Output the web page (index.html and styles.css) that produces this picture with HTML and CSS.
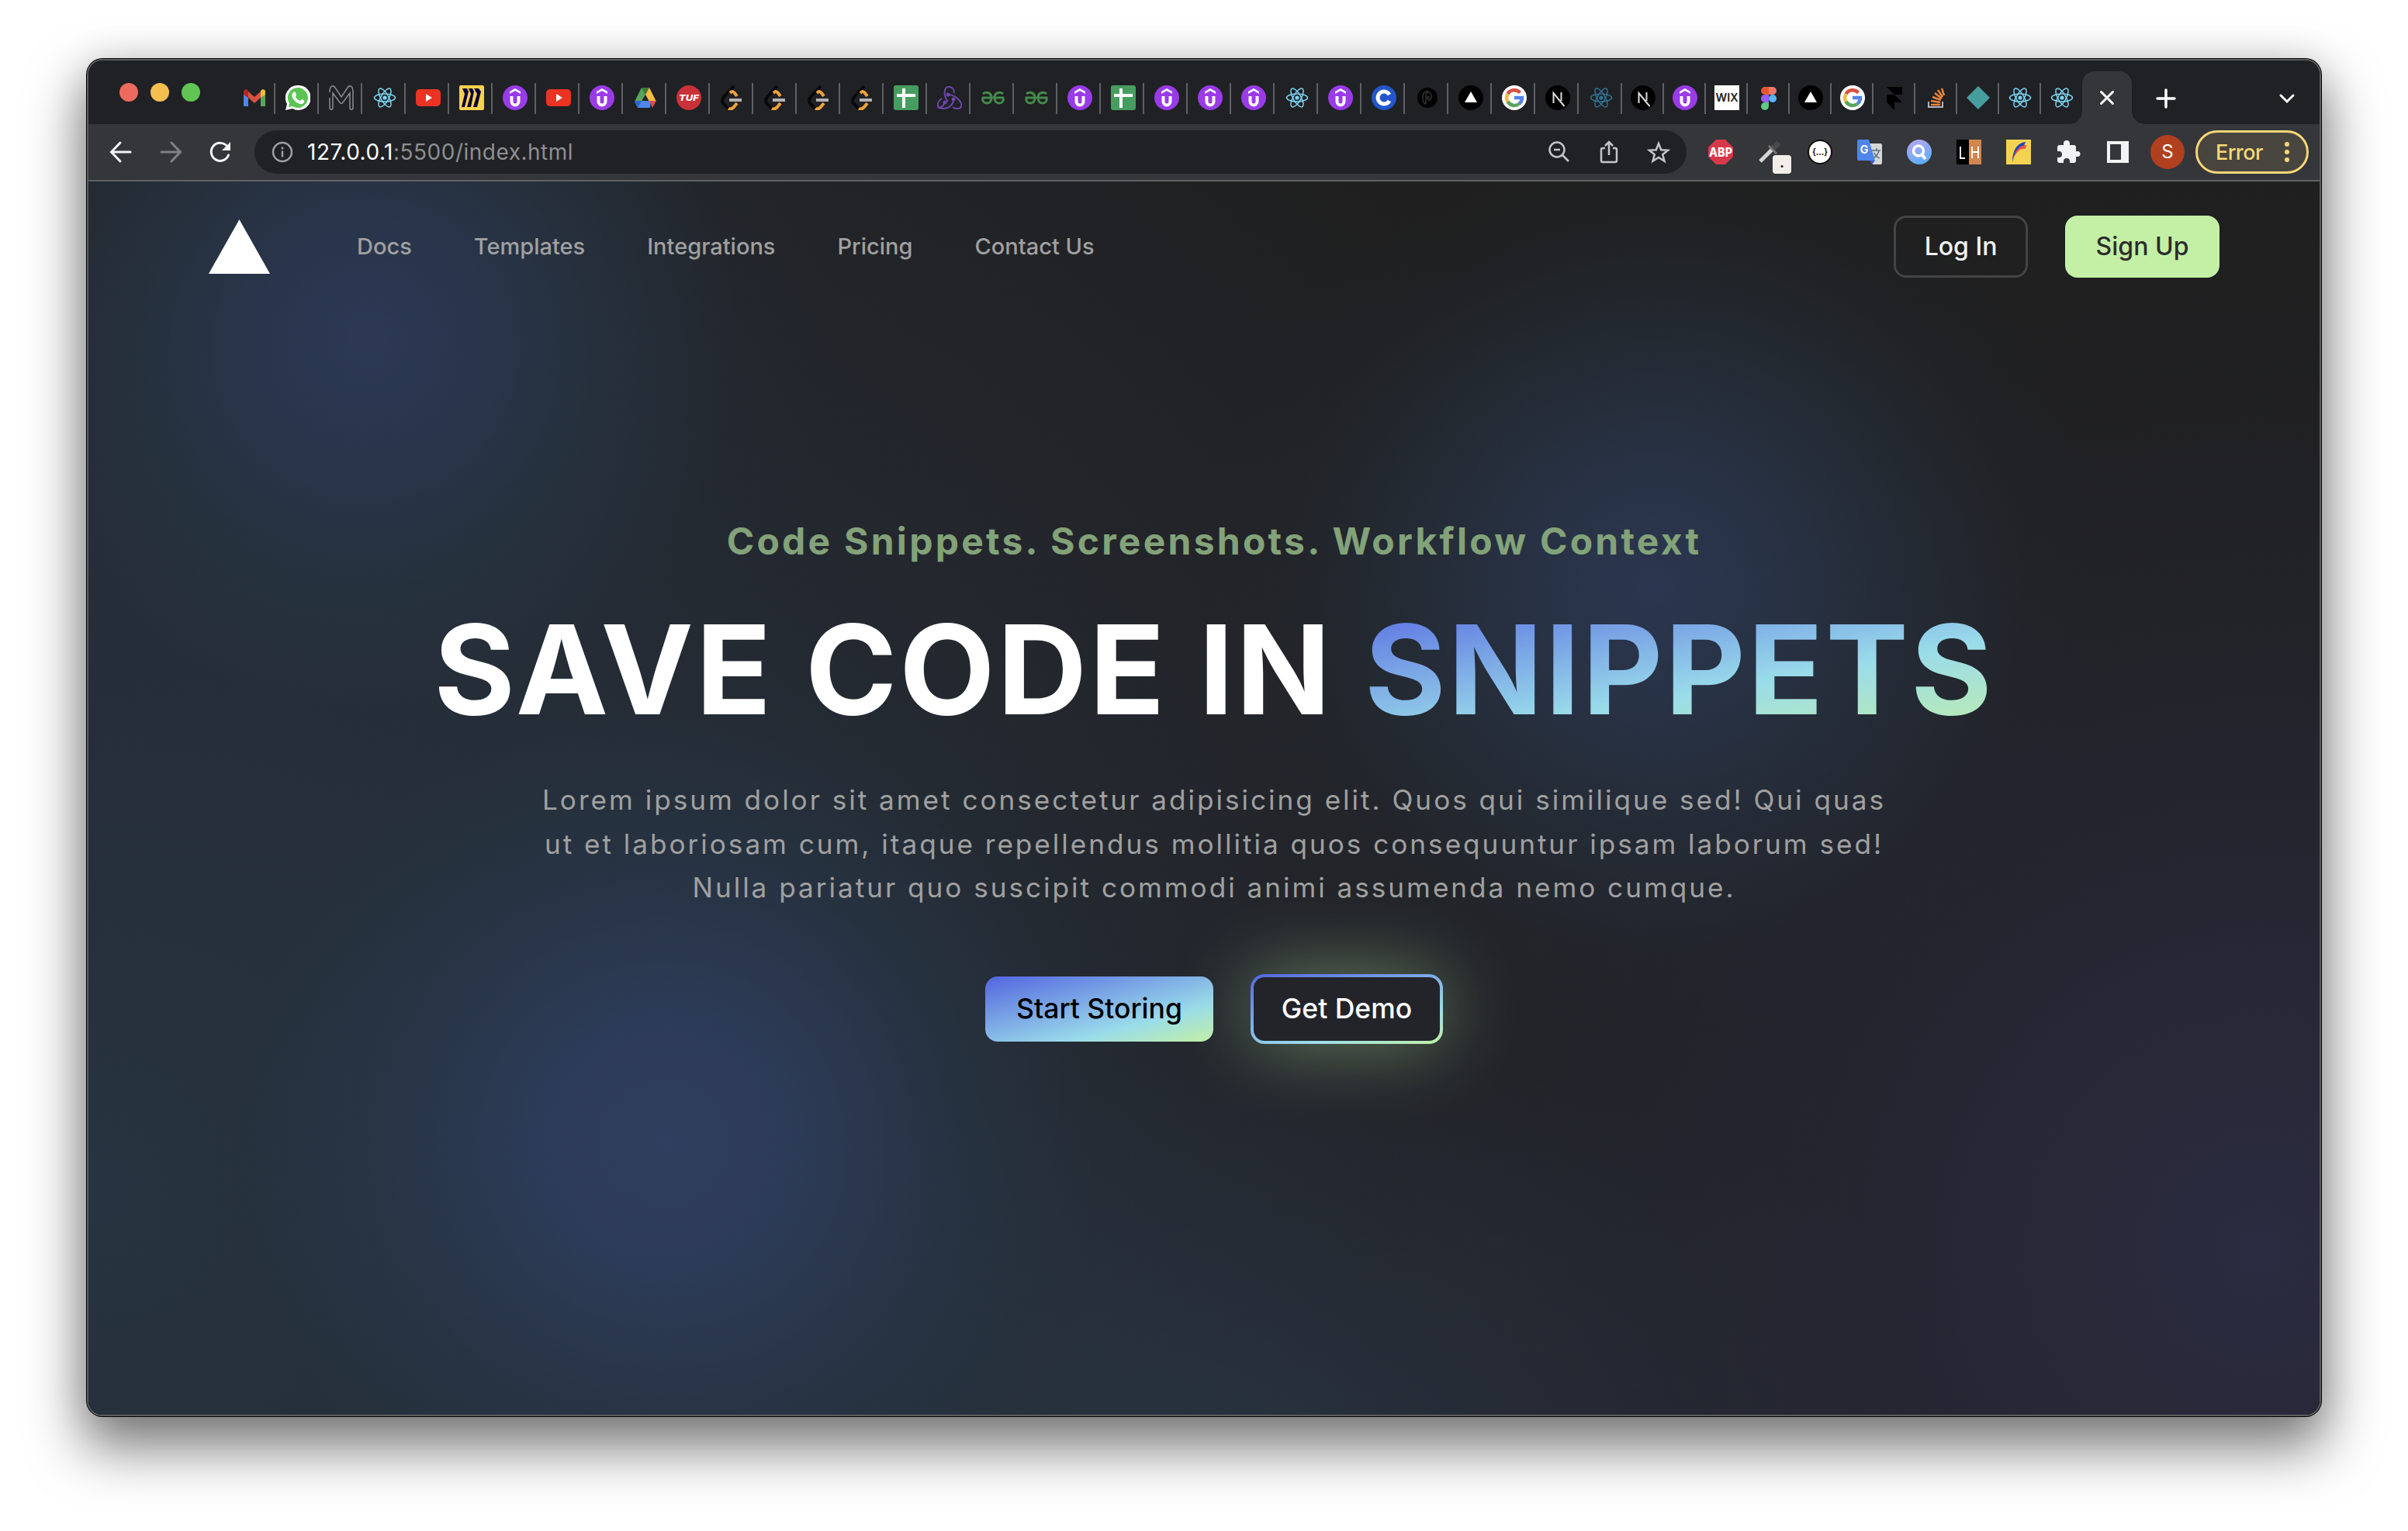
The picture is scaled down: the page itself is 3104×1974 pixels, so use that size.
FILE: index.html
```html
<!DOCTYPE html>
<html lang="en">
<head>
<meta charset="utf-8">
<title>Snippets</title>
<link rel="stylesheet" href="styles.css">
</head>
<body>
<svg width="0" height="0" class="defs" aria-hidden="true">
  <symbol id="gmail" viewBox="0 0 32 32"><path fill="#4f86ec" d="M2 11v16h6V16z"/><path fill="#58a55c" d="M30 11v16h-6V16z"/><path fill="#d85140" d="M8 8l8 7 8-7v8l-8 7-8-7z"/><path fill="#b5261e" d="M2 11V8c0-3 4-4 6-1v9l-6-4z"/><path fill="#f2bd42" d="M30 11V8c0-3-4-4-6-1v9l6-4z"/></symbol>
  <symbol id="whatsapp" viewBox="0 0 32 32"><path fill="#fff" d="M16 0a16 16 0 1 1-7 30L0 32l2-8A16 16 0 0 1 16 0z"/><path fill="#5cc453" d="M16 3a13 13 0 1 1-7 24l-5 1 1-5A13 13 0 0 1 16 3z"/><path fill="#fff" d="M10 9c2-2 3 0 4 3l-1 3c2 3 3 4 6 5l2-2c3 1 4 2 3 4-3 4-8 2-12-2-4-4-5-8-2-11z"/></symbol>
  <symbol id="mono" viewBox="0 0 32 32"><path fill="none" stroke="#8b8c8f" stroke-width="1.5" d="M1 9c0-10 5-9 7-6l8 12 8-12c2-3 7-4 7 6v20c0 3-4 3-4 0V10l-9 12c-1 2-3 2-4 0L5 10v19c0 3-4 3-4 0V16"/></symbol>
  <symbol id="react" viewBox="0 0 32 32"><g fill="none" stroke="currentColor" stroke-width="1.5"><ellipse cx="16" cy="16" rx="13.5" ry="5"/><ellipse cx="16" cy="16" rx="13.5" ry="5" transform="rotate(60 16 16)"/><ellipse cx="16" cy="16" rx="13.5" ry="5" transform="rotate(120 16 16)"/></g><circle cx="16" cy="16" r="2.6" fill="currentColor"/></symbol>
  <symbol id="youtube" viewBox="0 0 32 32"><rect y="5" width="32" height="22" rx="5" fill="#ea3323"/><path fill="#fff" d="M13 11v10l8-5z"/></symbol>
  <symbol id="miro" viewBox="0 0 32 32"><rect width="32" height="32" rx="2" fill="#f9d24f"/><path fill="#07043a" d="M4 4h6l2 4-5 20H3l4-17zM12 4h5l2 4-4 20h-5l5-17zM19 4h6l3 4-5 20h-5l5-17z"/></symbol>
  <symbol id="udemy" viewBox="0 0 32 32"><circle cx="16" cy="16" r="16" fill="#9a3be8"/><path fill="#fff" d="M16 4l7 4v3l-7-4-7 4V8z"/><path fill="none" stroke="#fff" stroke-width="4" d="M11.500 14v7a4.500 4.500 0 0 0 9 0v-7"/></symbol>
  <symbol id="drive" viewBox="0 0 32 32"><path fill="#58a55c" d="M11 3l5 9-10 17-4-8z"/><path fill="#3b7d3c" d="M11 3h10l-5 9z"/><path fill="#f2bd42" d="M21 3l9 18h-9l-5-9z"/><path fill="#4f86ec" d="M11 20h12l-1 9H6z"/><path fill="#2f63cf" d="M2 20h9l-5 9z"/><path fill="#dd5144" d="M21 20h9l-5 9z"/></symbol>
  <symbol id="tuf" viewBox="0 0 32 32"><circle cx="16" cy="16" r="16" fill="#c93238"/><text x="16" y="20" text-anchor="middle" font-size="11" font-weight="800" font-style="italic" fill="#fff" textLength="26" lengthAdjust="spacingAndGlyphs">TUF</text></symbol>
  <symbol id="leet" viewBox="0 0 32 32"><g fill="none" stroke-width="4"><path stroke="#080808" d="M18 1L5 15c-3 4-2 7 0 9l6 6"/><path stroke="#f0a33b" d="M13 10c3-3 4-2 6 0l3 4M22 23l-4 5c-2 2-5 3-7 2"/><path stroke="#b3b3b3" d="M12 19h16"/></g></symbol>
  <symbol id="sheets" viewBox="0 0 32 32"><rect width="32" height="32" rx="3" fill="#479c5f"/><path stroke="#fff" stroke-width="4" d="M4 13h24M13 4v25"/></symbol>
  <symbol id="redux" viewBox="0 0 32 32"><g fill="none" stroke="#6c48aa" stroke-width="2"><path d="M14 21C8 14 8 2 15 2c5 0 7 4 7 8"/><path d="M10 22c-4 8-9 9-9 5-1-4 2-8 5-10M13 12c10-1 20 10 18 15-1 4-7 4-11 1"/><path d="M21 18c1 6-6 12-13 12-5 0-8-3-7-7"/></g><g fill="#6c48aa"><circle cx="14" cy="12" r="2.500"/><circle cx="10" cy="22" r="2.500"/><circle cx="21" cy="18" r="2.500"/></g></symbol>
  <symbol id="gfg" viewBox="0 0 32 32"><g fill="none" stroke="#438a4b" stroke-width="3"><path d="M3 11c4-3 11-2 11 5 0 5-3 7-6 7-4 0-6-3-5-7h26c1 4-1 7-5 7-3 0-6-2-6-7 0-7 7-8 11-5"/></g></symbol>
  <symbol id="coursera" viewBox="0 0 32 32"><circle cx="16" cy="16" r="16" fill="#2356cc"/><path fill="none" stroke="#fff" stroke-width="5" d="M23 12a8 8 0 1 0 0 8"/></symbol>
  <symbol id="dark" viewBox="0 0 32 32"><circle cx="16" cy="16" r="13" fill="#000"/><path fill="none" stroke="#333" stroke-width="1.500" d="M14 24V11c3-4 8-1 7 5-1 4-4 4-5 1s3-4 2 0M14 24c-3 0-4-3-4-9s4-8 8-7"/></symbol>
  <symbol id="vercel" viewBox="0 0 32 32"><circle cx="16" cy="16" r="16" fill="#000"/><path fill="#fff" d="M16 8l8 14H8z"/></symbol>
  <symbol id="google" viewBox="0 0 32 32"><circle cx="16" cy="16" r="16" fill="#fff"/><g fill="none" stroke-width="4.500"><path stroke="#d95040" d="M23.500 9.500A10 10 0 0 0 7.500 11"/><path stroke="#f2bd42" d="M7.500 11a10 10 0 0 0 0 10"/><path stroke="#58a55c" d="M7.500 21a10 10 0 0 0 14.500 3"/><path stroke="#5383ec" d="M22 24a10 10 0 0 0 4-8H16"/></g></symbol>
  <symbol id="next" viewBox="0 0 32 32"><circle cx="16" cy="16" r="16" fill="#000"/><path fill="none" stroke="#ddd" stroke-width="2" d="M10.500 23V10l14 17M20.500 9v11"/></symbol>
  <symbol id="wix" viewBox="0 0 32 32"><path fill="#fff" d="M0 0h32v32H0z"/><text x="16" y="21" text-anchor="middle" font-size="15" font-weight="600" fill="#222" textLength="29" lengthAdjust="spacingAndGlyphs">WIX</text></symbol>
  <symbol id="figma" viewBox="0 0 32 32"><path fill="#e4572e" d="M16 2v10h-5a5 5 0 0 1 0-10z"/><path fill="#ee786a" d="M16 2h5a5 5 0 0 1 0 10h-5z"/><path fill="#9b5cf6" d="M16 12v10h-5a5 5 0 0 1 0-10z"/><circle cx="21" cy="17" r="5" fill="#58b6f8"/><path fill="#62c884" d="M16 22v5a5 5 0 1 1-5-5z"/></symbol>
  <symbol id="framer" viewBox="0 0 32 32"><path fill="#000" d="M6 2h20v10H16l10 10H16v10L6 22V12h10z"/></symbol>
  <symbol id="stack" viewBox="0 0 32 32"><path fill="none" stroke="#b0b4ba" stroke-width="2" d="M6 21v7h18v-7"/><path stroke="#e9863b" stroke-width="2.500" d="M9 25h12M9 20l12 2M11 15l11 4M14 10l9 7M18 6l6 9M23 4l3 9"/></symbol>
  <symbol id="diamond" viewBox="0 0 32 32"><path fill="#479e9e" d="M16 1l15 15-15 15L1 16z"/></symbol>
</svg>

<div class="window">
  <div class="tabstrip">
    <div class="lights"><i class="red"></i><i class="yellow"></i><i class="green"></i></div>
    <div class="tabs">
      <div class="tab"><svg><use href="#gmail"/></svg></div>
      <div class="tab"><svg><use href="#whatsapp"/></svg></div>
      <div class="tab"><svg><use href="#mono"/></svg></div>
      <div class="tab"><svg><use href="#react"/></svg></div>
      <div class="tab"><svg><use href="#youtube"/></svg></div>
      <div class="tab"><svg><use href="#miro"/></svg></div>
      <div class="tab"><svg><use href="#udemy"/></svg></div>
      <div class="tab"><svg><use href="#youtube"/></svg></div>
      <div class="tab"><svg><use href="#udemy"/></svg></div>
      <div class="tab"><svg><use href="#drive"/></svg></div>
      <div class="tab"><svg><use href="#tuf"/></svg></div>
      <div class="tab"><svg><use href="#leet"/></svg></div>
      <div class="tab"><svg><use href="#leet"/></svg></div>
      <div class="tab"><svg><use href="#leet"/></svg></div>
      <div class="tab"><svg><use href="#leet"/></svg></div>
      <div class="tab"><svg><use href="#sheets"/></svg></div>
      <div class="tab"><svg><use href="#redux"/></svg></div>
      <div class="tab"><svg><use href="#gfg"/></svg></div>
      <div class="tab"><svg><use href="#gfg"/></svg></div>
      <div class="tab"><svg><use href="#udemy"/></svg></div>
      <div class="tab"><svg><use href="#sheets"/></svg></div>
      <div class="tab"><svg><use href="#udemy"/></svg></div>
      <div class="tab"><svg><use href="#udemy"/></svg></div>
      <div class="tab"><svg><use href="#udemy"/></svg></div>
      <div class="tab"><svg><use href="#react"/></svg></div>
      <div class="tab"><svg><use href="#udemy"/></svg></div>
      <div class="tab"><svg><use href="#coursera"/></svg></div>
      <div class="tab"><svg><use href="#dark"/></svg></div>
      <div class="tab"><svg><use href="#vercel"/></svg></div>
      <div class="tab"><svg><use href="#google"/></svg></div>
      <div class="tab"><svg><use href="#next"/></svg></div>
      <div class="tab old-react"><svg><use href="#react"/></svg></div>
      <div class="tab narrow"><svg><use href="#next"/></svg></div>
      <div class="tab narrow"><svg><use href="#udemy"/></svg></div>
      <div class="tab narrow"><svg><use href="#wix"/></svg></div>
      <div class="tab narrow"><svg><use href="#figma"/></svg></div>
      <div class="tab narrow"><svg><use href="#vercel"/></svg></div>
      <div class="tab narrow"><svg><use href="#google"/></svg></div>
      <div class="tab narrow"><svg><use href="#framer"/></svg></div>
      <div class="tab narrow"><svg><use href="#stack"/></svg></div>
      <div class="tab narrow"><svg><use href="#diamond"/></svg></div>
      <div class="tab narrow"><svg><use href="#react"/></svg></div>
      <div class="tab narrow last"><svg><use href="#react"/></svg></div>
    </div>
    <div class="active-tab"><svg viewBox="0 0 32 32"><path d="M8.500 8.500l15 15m0-15l-15 15"/></svg></div>
    <svg class="new-tab" viewBox="0 0 32 32"><path d="M16 5v22M5 16h22"/></svg>
    <svg class="tab-search" viewBox="0 0 32 32"><path d="M8 12l8 8 8-8"/></svg>
  </div>

  <div class="toolbar">
    <svg class="tool" viewBox="0 0 32 32"><path d="M28 16H4M15 4L3.500 16 15 28"/></svg>
    <svg class="tool dim" viewBox="0 0 32 32"><path d="M4 16h24M17 4l11.500 12L17 28"/></svg>
    <svg class="tool" viewBox="0 0 32 32"><path d="M25 9A11.500 11.500 0 1 0 26.500 20"/><path class="solid" d="M29 3v11H18z"/></svg>
    <div class="address">
      <svg class="info" viewBox="0 0 32 32"><circle cx="16" cy="16" r="12"/><path d="M16 14.500v8M16 9.500v3"/></svg>
      <span class="url"><b>127.0.0.1</b>:5500/index.html</span>
      <svg viewBox="0 0 32 32"><circle cx="13" cy="13" r="9.500"/><path d="M20 20l8 8M9 13h8"/></svg>
      <svg viewBox="0 0 32 32"><path d="M11 11H8a2 2 0 0 0-2 2v14a2 2 0 0 0 2 2h16a2 2 0 0 0 2-2V13a2 2 0 0 0-2-2h-3M16 20V4M11 8l5-5 5 5"/></svg>
      <svg viewBox="0 0 32 32"><path d="M16 5l3.200 8.200 8.800.5-6.800 5.500 2.300 8.600L16 23l-7.500 4.800 2.300-8.600L4 13.700l8.800-.5z"/></svg>
    </div>
    <div class="extensions">
      <svg viewBox="0 0 32 32"><path fill="#d83849" d="M10 0h12l10 10v12L22 32H10L0 22V10z"/><text x="16" y="21.500" text-anchor="middle" font-size="16" font-weight="800" fill="#fff" textLength="30" lengthAdjust="spacingAndGlyphs">ABP</text></svg>
      <div class="picker"><svg viewBox="0 0 32 32"><path stroke="#d5d5d5" stroke-width="5" d="M3 28L19 12"/><path stroke="#4a4a4a" stroke-width="7" d="M18 13L27 4"/><path stroke="#777" stroke-width="3" d="M14 8l10 10"/></svg><span class="badge">.</span></div>
      <svg viewBox="0 0 32 32"><circle cx="16" cy="16" r="15" fill="#fff" stroke="#111" stroke-width="2"/><text x="16" y="20" text-anchor="middle" font-size="12" font-weight="700" fill="#111" textLength="20" lengthAdjust="spacingAndGlyphs">{...}</text></svg>
      <svg viewBox="0 0 32 32"><path fill="#d5d7d9" d="M14 5h16a2 2 0 0 1 2 2v23a2 2 0 0 1-2 2H20z"/><path fill="#3a5bc0" d="M16 27h7l-4 5z"/><path fill="#4f86ec" d="M2 0h13l8 27H2a2 2 0 0 1-2-2V2a2 2 0 0 1 2-2z"/><text x="9" y="18" text-anchor="middle" font-size="14" font-weight="700" fill="#fff">G</text><path fill="none" stroke="#5d7480" stroke-width="1.500" d="M19 14h11M25 11v3M28 14c-1 5-4 8-7 10M22 17c1 3 4 6 7 7"/></svg>
      <svg viewBox="0 0 32 32"><defs><linearGradient id="lens" x2=".4" y2="1"><stop stop-color="#bfa4ef"/><stop offset="1" stop-color="#62aef8"/></linearGradient></defs><circle cx="16" cy="16" r="16" fill="url(#lens)"/><circle cx="15" cy="14.500" r="6.500" fill="none" stroke="#fff" stroke-width="3.500"/><path stroke="#fff" stroke-width="4" d="M19 19l5 6"/></svg>
      <svg viewBox="0 0 32 32"><path d="M0 0h16v32H0z"/><path fill="#d18650" d="M16 0h16v32H16z"/><path fill="none" stroke="#fff" stroke-width="1.800" d="M5 9v15h6M20 9v15M28 9v15M20 16h8"/></svg>
      <svg viewBox="0 0 32 32"><path fill="#f3d34f" d="M0 0h32v32H0z"/><path fill="#1e44b5" d="M8 29C8 14 14 4 25 3l-2 5C15 9 11 17 8 29z"/><path fill="#e8544a" d="M10 23C12 13 18 7 26 7l-1 5c-7-1-11 4-15 11z"/></svg>
      <svg viewBox="0 0 32 32"><path fill="#f1f3f4" d="M28 15h-2v-5a3 3 0 0 0-3-3h-5V5a4 4 0 0 0-8 0v2H5a3 3 0 0 0-3 3v5h2a4 4 0 0 1 0 8H2v4a3 3 0 0 0 3 3h5v-2a4 4 0 0 1 8 0v2h5a3 3 0 0 0 3-3v-5h2a3.500 3.500 0 0 0 0-7z"/></svg>
      <svg viewBox="0 0 32 32"><path fill="#f1f3f4" fill-rule="evenodd" d="M2 2h28v28H2zM6 6v20h14V6z"/></svg>
    </div>
    <div class="avatar">S</div>
    <div class="error">Error<span class="dots"><i></i><i></i><i></i></span></div>
  </div>

  <div class="page">
    <nav class="nav">
      <svg class="logo" viewBox="0 0 79 70"><path fill="#fff" d="M39.500 0L79 70H0z"/></svg>
      <div class="links"><a>Docs</a><a>Templates</a><a>Integrations</a><a>Pricing</a><a>Contact Us</a></div>
      <a class="btn login">Log In</a>
      <a class="btn signup">Sign Up</a>
    </nav>
    <main class="hero">
      <h3 class="tagline">Code Snippets. Screenshots. Workflow Context</h3>
      <h1 class="title">SAVE CODE IN <span class="grad">SNIPPETS</span></h1>
      <p class="lead">Lorem ipsum dolor sit amet consectetur adipisicing elit. Quos qui similique sed! Qui quas<br>ut et laboriosam cum, itaque repellendus mollitia quos consequuntur ipsam laborum sed!<br>Nulla pariatur quo suscipit commodi animi assumenda nemo cumque.</p>
      <div class="actions"><a class="start">Start Storing</a><a class="demo">Get Demo</a></div>
    </main>
  </div>
</div>
</body>
</html>
```
FILE: styles.css
```css
* { box-sizing: border-box; }
body {
  margin: 0;
  height: 1974px;
  overflow: hidden;
  padding: 76px 112px 0;
  background: #fff;
  font-family: Inter, "Liberation Sans", sans-serif;
}
svg { display: block; overflow: visible; }
.defs { position: absolute; }

.window {
  width: 2880px;
  height: 1750px;
  border: 2px solid #5c5e5f;
  border-radius: 20px;
  overflow: hidden;
  display: flex;
  flex-direction: column;
  background: #202124;
  box-shadow: 0 0 0 1px #000, 0 36px 70px 6px rgba(0, 0, 0, .5), 0 0 50px rgba(0, 0, 0, .12);
}

/* tab strip */
.tabstrip { height: 82px; flex: none; display: flex; align-items: center; background: #202124; }
.lights { display: flex; align-items: flex-start; gap: 16px; width: 185px; height: 82px; padding: 29px 0 0 40px; }
.lights i { width: 24px; height: 24px; border-radius: 50%; }
.red { background: #ed6a5e; }
.yellow { background: #f4bf4f; }
.green { background: #61c554; }
.tabs { display: flex; margin-top: 15px; }
.tab { width: 56px; height: 40px; border-right: 2px solid #5f6063; display: flex; align-items: center; justify-content: center; padding: 0 0 2px 3px; color: #7cd6f5; }
.tab svg { width: 32px; height: 32px; flex: none; }
.tab.narrow { width: 54px; padding-left: 1px; }
.tab.last { border-right: 0; padding-right: 2px; }
.tab.old-react { color: #2f7391; }
.active-tab { position: relative; width: 64px; height: 68px; margin: 14px 0 0 -1px; padding-bottom: 1px; border-radius: 16px 16px 0 0; background: #35363a; display: flex; align-items: center; justify-content: center; }
.active-tab::before, .active-tab::after { content: ""; position: absolute; bottom: 0; width: 16px; height: 16px; }
.active-tab::before { right: 100%; background: radial-gradient(circle at 0 0, transparent 15.500px, #35363a 16px); }
.active-tab::after { left: 100%; background: radial-gradient(circle at 100% 0, transparent 15.500px, #35363a 16px); }
.active-tab svg, .new-tab, .tab-search { width: 32px; height: 32px; fill: none; stroke: #fff; stroke-width: 3; stroke-linecap: round; }
.new-tab { margin: 15px 0 0 28px; stroke-width: 3.500; }
.tab-search { margin: 15px 26px 0 auto; }

/* toolbar */
.toolbar { height: 74px; flex: none; display: flex; align-items: center; background: #35363a; border-bottom: 2px solid #5f6164; padding: 0 14px 0 26px; }
.tool { width: 32px; height: 32px; margin-right: 32px; fill: none; stroke: #f1f3f4; stroke-width: 3; stroke-linecap: round; }
.tool.dim { stroke: #808184; }
.tool .solid { fill: #f1f3f4; stroke: none; }
.address { width: 1846px; height: 56px; margin-left: -4px; border-radius: 28px; background: #202124; display: flex; align-items: center; padding: 0 20px; gap: 32px; }
.address svg { width: 32px; height: 32px; fill: none; stroke: #c4c5c7; stroke-width: 2.500; }
.address .info { stroke: #9aa0a6; margin-right: -16px; }
.url { flex: 1; font-size: 28px; letter-spacing: .5px; color: #8d8f92; }
.url b { font-weight: 400; color: #fff; }
.extensions { display: flex; gap: 32px; margin-left: 28px; }
.extensions svg { width: 32px; height: 32px; }
.picker { position: relative; }
.badge { position: absolute; left: 19px; top: 20px; width: 24px; height: 24px; border-radius: 4px; background: #f3eeea; color: #222; font-size: 18px; line-height: 20px; font-weight: 700; text-align: center; }
.avatar { width: 44px; height: 44px; margin-left: 26px; border-radius: 50%; background: #b1401f; color: #fff; font-size: 24px; line-height: 44px; text-align: center; }
.error { width: 146px; height: 56px; margin-left: 14px; border: 3px solid #f8d777; border-radius: 28px; background: #47453e; color: #f8d777; display: flex; align-items: center; justify-content: space-between; font-size: 27px; font-weight: 500; letter-spacing: -.6px; padding: 0 22px 0 23px; }
.dots { display: grid; gap: 4px; }
.dots i { width: 6px; height: 6px; border-radius: 50%; background: #f8d777; }

/* page */
.page {
  flex: 1;
  padding: 43px 129px 0 155px;
  background:
    radial-gradient(circle 600px at 360px 200px, rgba(46, 60, 92, .85) 0, rgba(43, 58, 86, .75) 22%, rgba(40, 56, 74, .5) 50%, rgba(38, 48, 60, .12) 80%, transparent 100%),
    radial-gradient(circle 580px at 2020px 520px, rgba(45, 58, 88, .85) 0, rgba(43, 57, 82, .7) 28%, rgba(40, 54, 72, .45) 55%, rgba(36, 44, 56, .12) 82%, transparent 100%),
    radial-gradient(circle 680px at 745px 1240px, rgba(49, 63, 97, .95) 0, rgba(46, 62, 94, .8) 25%, rgba(40, 56, 76, .5) 55%, rgba(38, 48, 60, .12) 82%, transparent 100%),
    radial-gradient(circle 1500px at 2800px 1380px, rgba(44, 44, 67, .95) 0, rgba(41, 41, 60, .75) 25%, rgba(37, 38, 50, .6) 50%, rgba(34, 35, 40, .3) 75%, transparent 100%),
    radial-gradient(ellipse 900px 520px at 1560px 1640px, rgba(42, 55, 72, .85), transparent),
    radial-gradient(ellipse 2300px 1900px at 0 1300px, #273340, #252d37 40%, rgba(36, 40, 48, .7) 70%, transparent),
    #1f1f1f;
}
.nav { display: flex; align-items: center; height: 82px; }
.logo { width: 79px; height: 70px; }
.links { display: flex; flex: 1; gap: 80px; margin-left: 112px; padding-bottom: 2px; font-size: 29px; font-weight: 500; color: #a0a0a0; }
.btn { height: 80px; border-radius: 16px; font-size: 32px; font-weight: 500; display: flex; align-items: center; justify-content: center; padding-bottom: 1px; }
.login { width: 173px; border: 3px solid #444; color: #f2f2f2; }
.signup { width: 199px; margin-left: 48px; background: #c3f0a5; color: #2c2c2c; }
.hero { display: flex; flex-direction: column; align-items: center; text-align: center; padding-top: 305px; }
.tagline { margin: 0; font-size: 48px; line-height: 68px; font-weight: 700; letter-spacing: 3.250px; color: #83a279; white-space: nowrap; }
.title { margin: 34px 0 0; font-size: 160px; line-height: 194px; font-weight: 700; letter-spacing: 3px; color: #fff; white-space: nowrap; }
.grad { background: linear-gradient(170deg, #5465e0 0%, #9adcea 60%, #c3f0a5 100%); background-clip: text; -webkit-background-clip: text; color: transparent; }
.lead { margin: 43px 0 0; font-size: 35.200px; line-height: 56.500px; letter-spacing: 2.960px; color: #a0a0a0; white-space: nowrap; }
.actions { display: flex; align-items: center; gap: 48px; margin-top: 83px; font-size: 35.500px; font-weight: 500; }
.start { width: 294px; height: 84px; line-height: 83px; border-radius: 16px; background: linear-gradient(165deg, #5465e0 0%, #9adcea 70%, #c3f0a5 100%); color: #000; }
.demo { width: 248px; height: 90px; line-height: 81px; border: 4px solid transparent; border-radius: 18px; color: #fff; background: linear-gradient(#23242a, #23242a) padding-box, linear-gradient(165deg, #5465e0 0%, #9adcea 70%, #c3f0a5 100%) border-box; box-shadow: 0 0 100px rgba(195, 240, 165, .45); }
```
